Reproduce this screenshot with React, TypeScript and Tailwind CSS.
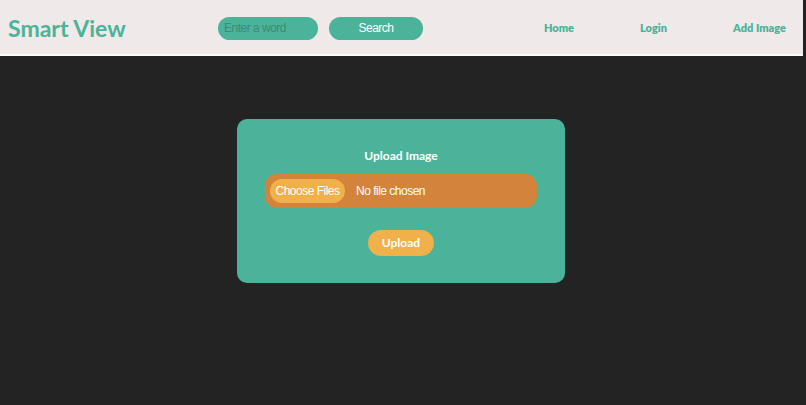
import React from "react";

export default function App() {
  return (
    <div className="min-h-[405px] w-full bg-[#232323]">
      <div className="w-[803px]">
        <header className="flex h-[56px] items-center border-b-2 border-[#fafafa] bg-[#efe9e9] pt-[2px]">
          <div className="w-[218px] pl-2 font-['Lato',sans-serif] text-[23px] font-bold leading-none text-[#4bb39a]">
            Smart View
          </div>
          <input
            type="text"
            placeholder="Enter a word"
            className="h-[23px] w-[100px] rounded-full bg-[#4bb39a] px-[6px] font-['Liberation_Sans',Arial,sans-serif] text-[12px] tracking-[-0.5px] text-[#3a7a68] outline-none placeholder:text-[#3f8a76]"
          />
          <button className="ml-[11px] h-[23px] w-[94px] rounded-full bg-[#4bb39a] font-['Liberation_Sans',Arial,sans-serif] text-[12px] tracking-[-0.5px] text-white">
            Search
          </button>
          <nav className="ml-auto mr-[17px] flex gap-[66px] font-['Lato',sans-serif] text-[11px] font-extrabold text-[#4bb39a]">
            <a>Home</a>
            <a>Login</a>
            <a>Add Image</a>
          </nav>
        </header>
        <div className="mr-px flex justify-center pt-[63px]">
          <div className="flex h-[164px] w-[328px] flex-col items-center rounded-[10px] bg-[#4bb39a] px-7 pt-[29px]">
            <div className="font-['Lato',sans-serif] text-[12px] font-bold leading-[16px] text-white">
              Upload Image
            </div>
            <div className="mt-[10px] flex h-[34px] w-full items-center rounded-[12px] bg-[#d4843a] px-[5px] font-['Liberation_Sans',Arial,sans-serif] text-[12px] tracking-[-0.5px] text-white">
              <span className="flex h-[24px] w-[75px] items-center justify-center rounded-full bg-[#f0b04a]">
                Choose Files
              </span>
              <span className="ml-[11px]">No file chosen</span>
            </div>
            <button className="mt-[22px] h-[26px] w-[66px] rounded-full bg-[#f0b04a] font-['Lato',sans-serif] text-[12px] font-bold text-white">
              Upload
            </button>
          </div>
        </div>
      </div>
    </div>
  );
}
